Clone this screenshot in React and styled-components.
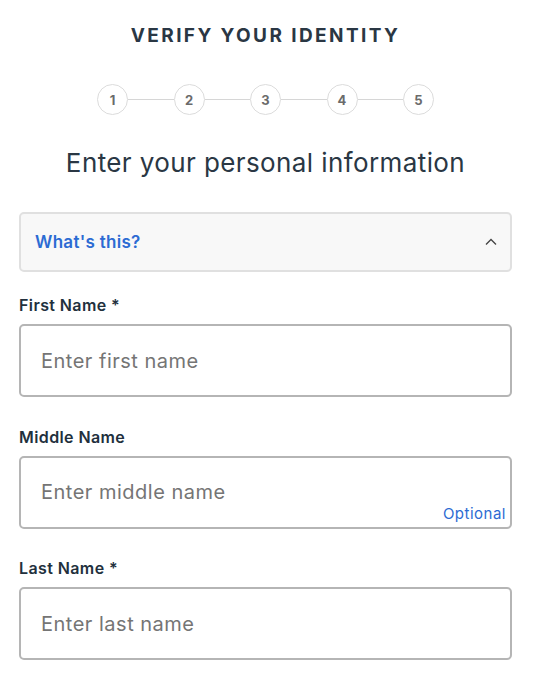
import React from 'react';
import styled, { createGlobalStyle } from 'styled-components';

const GlobalStyle = createGlobalStyle`
  * { box-sizing: border-box; }
  body {
    margin: 0;
    background: #fff;
    font-family: Inter, "Open Sans", sans-serif;
  }
`;

const Page = styled.div`
  padding: 0 27px 0 19px;
  display: flex;
  flex-direction: column;
`;

const Title = styled.h1`
  margin: 25px 0 0;
  text-align: center;
  font-size: 19px;
  font-weight: 700;
  letter-spacing: 2.4px;
  color: #2a3744;
  line-height: 22px;
`;

const Stepper = styled.div`
  display: flex;
  align-items: center;
  justify-content: center;
  margin-top: 37px;
`;

const Step = styled.div`
  width: 31px;
  height: 31px;
  border-radius: 50%;
  border: 1px solid #dcdcdc;
  background: #fff;
  display: flex;
  align-items: center;
  justify-content: center;
  font-size: 13px;
  font-weight: 700;
  color: #6b6b6b;
`;

const Connector = styled.div`
  width: 45.5px;
  height: 1px;
  background: #d6d6d6;
`;

const Heading = styled.h2`
  margin: 32px 0 0;
  text-align: center;
  font-size: 26px;
  font-weight: 400;
  letter-spacing: 0.4px;
  color: #2a3744;
  line-height: 32px;
`;

const Accordion = styled.div`
  margin-top: 33px;
  height: 60px;
  border: 2px solid #e0e0e0;
  border-radius: 5px;
  background: #f8f8f8;
  display: flex;
  align-items: center;
  justify-content: space-between;
  padding: 0 13px 0 14px;
`;

const AccordionTitle = styled.span`
  color: #2c6bd3;
  font-size: 17px;
  font-weight: 600;
  letter-spacing: 0.3px;
`;

const Field = styled.div`
  display: flex;
  flex-direction: column;
  margin-top: ${p => p.first ? '23px' : '29.5px'};
`;

const Label = styled.label`
  font-size: 16px;
  font-weight: 600;
  letter-spacing: 0.4px;
  color: #22303d;
  line-height: 21px;
  margin-bottom: 8px;
`;

const InputBox = styled.div`
  position: relative;
  height: 73px;
  border: 2px solid #b5b5b5;
  border-radius: 5px;
  display: flex;
  align-items: center;
  padding: 0 18px;
`;

const Input = styled.input`
  border: none;
  outline: none;
  width: 100%;
  font-family: inherit;
  font-size: 20px;
  letter-spacing: 0.5px;
  color: #333;
  background: transparent;
  &::placeholder {
    color: #757575;
  }
`;

const Optional = styled.span`
  position: absolute;
  right: 4px;
  bottom: 4px;
  font-size: 15px;
  letter-spacing: 0.5px;
  color: #2c6bd3;
`;

const ChevronUp = () => (
  <svg width="12" height="8" viewBox="0 0 12 8" fill="none">
    <path d="M1 6.5L6 1.5L11 6.5" stroke="#444" strokeWidth="1.3" />
  </svg>
);

const NameField = ({ label, required, placeholder, optional, first }) => (
  <Field first={first}>
    <Label>{label}{required && ' *'}</Label>
    <InputBox>
      <Input placeholder={placeholder} />
      {optional && <Optional>Optional</Optional>}
    </InputBox>
  </Field>
);

export default function App() {
  return (
    <Page>
      <GlobalStyle />
      <Title>VERIFY YOUR IDENTITY</Title>
      <Stepper>
        {[1, 2, 3, 4, 5].map((n, i) => (
          <React.Fragment key={n}>
            {i > 0 && <Connector />}
            <Step>{n}</Step>
          </React.Fragment>
        ))}
      </Stepper>
      <Heading>Enter your personal information</Heading>
      <Accordion>
        <AccordionTitle>What's this?</AccordionTitle>
        <ChevronUp />
      </Accordion>
      <NameField first label="First Name" required placeholder="Enter first name" />
      <NameField label="Middle Name" placeholder="Enter middle name" optional />
      <NameField label="Last Name" required placeholder="Enter last name" />
    </Page>
  );
}
